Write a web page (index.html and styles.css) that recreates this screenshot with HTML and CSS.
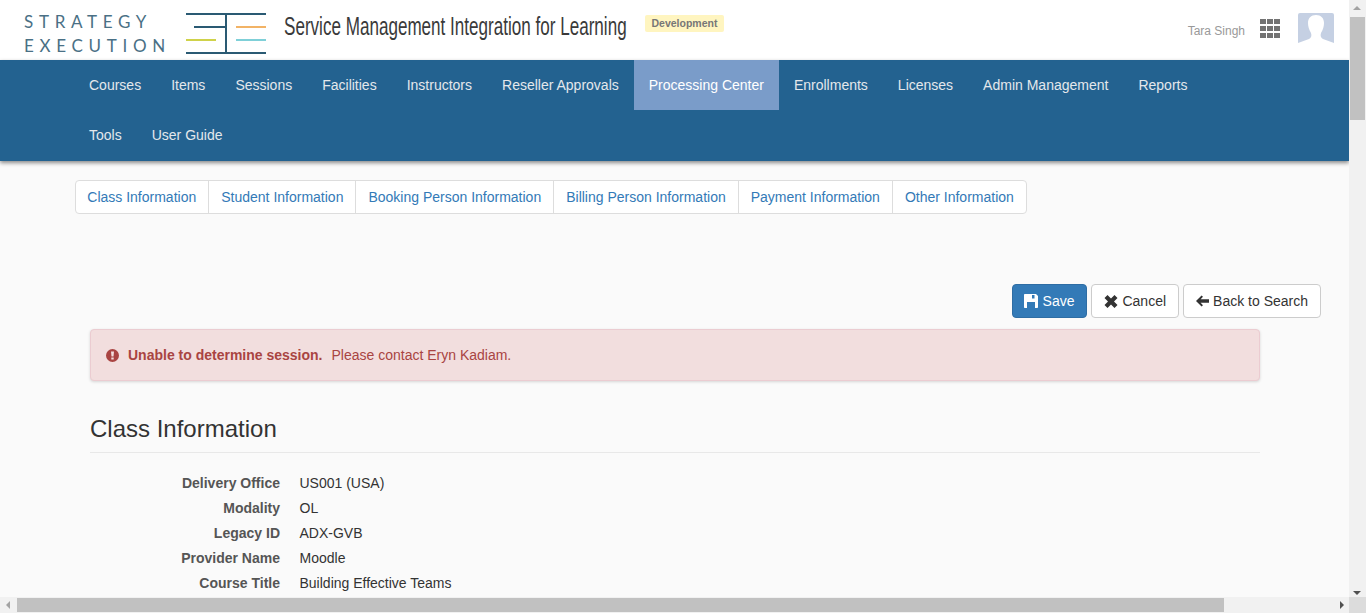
FILE: index.html
```html
<!DOCTYPE html>
<html lang="en">

<head>
    <meta charset="UTF-8">
    <title>Service Management Integration for Learning</title>
    <link rel="stylesheet" href="styles.css">
</head>

<body>
    <header class="topbar">
        <div class="logo-text">
            <div>STRATEGY</div>
            <div>EXECUTION</div>
        </div>
        <svg class="logo-mark" width="82" height="42" viewBox="0 0 82 42">
            <g fill="none" stroke-width="2">
                <path d="M0 2H80M8 15H40M40 2V40M0 41H80" stroke="#2a5a73" />
                <path d="M50 15H80" stroke="#f2b366" />
                <path d="M0 28H30" stroke="#cfd24a" />
                <path d="M50 28H80" stroke="#7fd0d8" />
            </g>
        </svg>
        <div class="app-title">Service Management Integration for Learning</div>
        <span class="env-badge">Development</span>
        <div class="user-area">
            <span class="user-name">Tara Singh</span>
            <div class="apps-grid">
                <i></i><i></i><i></i><i></i><i></i><i></i><i></i><i></i><i></i>
            </div>
            <svg class="avatar" width="36" height="33" viewBox="0 0 36 33">
                <rect width="36" height="33" rx="2" fill="#c5d0e3" />
                <path d="M0 33V30L11 26C13 25 14 23 13 20C11 17 10 13 10 10C10 5 13 2 18 2C23 2 26 5 26 10C26 13 25 17 23 20C22 23 23 25 25 26L36 30V33Z" fill="#fff" />
            </svg>
        </div>
    </header>

    <nav class="mainnav">
        <a href="#">Courses</a>
        <a href="#">Items</a>
        <a href="#">Sessions</a>
        <a href="#">Facilities</a>
        <a href="#">Instructors</a>
        <a href="#">Reseller Approvals</a>
        <a href="#" class="active">Processing Center</a>
        <a href="#">Enrollments</a>
        <a href="#">Licenses</a>
        <a href="#">Admin Management</a>
        <a href="#">Reports</a>
        <a href="#">Tools</a>
        <a href="#">User Guide</a>
    </nav>

    <div class="content">
        <ul class="tabs">
            <li><a href="#">Class Information</a></li>
            <li><a href="#">Student Information</a></li>
            <li><a href="#">Booking Person Information</a></li>
            <li><a href="#">Billing Person Information</a></li>
            <li><a href="#">Payment Information</a></li>
            <li><a href="#">Other Information</a></li>
        </ul>

        <div class="actions">
            <button class="btn btn-primary">
                <svg width="14" height="14" viewBox="0 0 14 14"><path fill-rule="evenodd" d="M0 1C0 .4.4 0 1 0H12L14 2V13C14 13.600 13.600 14 13 14H1C.4 14 0 13.600 0 13ZM8 1V4.500H10.500V1ZM3 8V14H11V8Z" fill="#fff" /></svg>
                Save
            </button>
            <button class="btn">
                <svg width="14" height="13" viewBox="0 0 13 13"><path d="M0 3L3 0L6.500 3.500L10 0L13 3L9.500 6.500L13 10L10 13L6.500 9.500L3 13L0 10L3.500 6.500Z" fill="#333" /></svg>
                Cancel
            </button>
            <button class="btn">
                <svg width="13" height="12" viewBox="0 0 14 12"><path d="M6 0L7.500 1.500L5 4H14V8H5L7.500 10.500L6 12L0 6Z" fill="#333" /></svg>
                Back to Search
            </button>
        </div>

        <div class="section">
            <div class="alert">
                <svg width="13" height="13" viewBox="0 0 13 13"><path fill-rule="evenodd" d="M6.500 0A6.500 6.500 0 1 1 6.500 13A6.500 6.500 0 1 1 6.500 0ZM5 2.500L5.500 7.500H7.500L8 2.500ZM5.300 8.500V10.500H7.700V8.500Z" fill="#a94442" /></svg>
                <strong>Unable to determine session.</strong>
                <span>Please contact Eryn Kadiam.</span>
            </div>

            <h3 class="section-title">Class Information</h3>

            <dl class="details">
                <dt>Delivery Office</dt>
                <dd>US001 (USA)</dd>
                <dt>Modality</dt>
                <dd>OL</dd>
                <dt>Legacy ID</dt>
                <dd>ADX-GVB</dd>
                <dt>Provider Name</dt>
                <dd>Moodle</dd>
                <dt>Course Title</dt>
                <dd>Building Effective Teams</dd>
            </dl>
        </div>
    </div>

    <!-- browser scrollbars -->
    <div class="scroll-v">
        <span class="arrow arrow-up"></span>
        <span class="thumb-v"></span>
        <span class="arrow arrow-down"></span>
    </div>
    <div class="scroll-h">
        <span class="arrow arrow-left"></span>
        <span class="thumb-h"></span>
        <span class="arrow arrow-right"></span>
    </div>
    <div class="scroll-corner"></div>
</body>

</html>
```

FILE: styles.css
```css
html,
body {
    margin: 0;
    height: 613px;
    overflow: hidden;
}

body {
    background: #fafafa;
    color: #333;
    font-family: "Liberation Sans", Arial, sans-serif;
    font-size: 14px;
    line-height: 20px;
}

.topbar {
    height: 60px;
    width: 1349px;
    background: #fff;
    display: flex;
    align-items: flex-start;
    box-sizing: border-box;
    padding-left: 24px;
}

.logo-text {
    width: 162px;
    margin-top: 10px;
    font-family: "Lato", sans-serif;
    font-size: 17px;
    line-height: 24px;
    letter-spacing: 5.700px;
    color: #4a7085;
    white-space: nowrap;
}

.logo-mark {
    margin-top: 12px;
}

/* no condensed family installed, so the title is squeezed to its width */
.app-title {
    margin: 11px 0 0 16px;
    width: 342px;
    font-family: "Liberation Sans", sans-serif;
    font-size: 25px;
    line-height: 30px;
    color: #3a3a3a;
    white-space: nowrap;
    transform: scaleX(.683);
    transform-origin: left top;
}

.env-badge {
    margin: 15px 0 0 19px;
    padding: 0 6.500px;
    height: 17px;
    background: #fff5c0;
    border-radius: 2px;
    color: #777;
    font-size: 10.500px;
    font-weight: bold;
    line-height: 17px;
}

.user-area {
    margin-left: auto;
    margin-top: 13px;
    padding-right: 15px;
    display: flex;
    align-items: flex-start;
}

.user-name {
    margin-top: 8px;
    font-size: 12px;
    color: #999;
}

.apps-grid {
    margin: 6px 0 0 15px;
    width: 20px;
    display: grid;
    grid-template-columns: repeat(3, 6px);
    grid-auto-rows: 5px;
    gap: 2px 1px;
}

.apps-grid i {
    background: #737373;
}

.avatar {
    margin-left: 18px;
}

.mainnav {
    width: 1349px;
    height: 101px;
    box-sizing: border-box;
    padding: 0 100px 0 74px;
    background: #236290;
    box-shadow: 0 2px 4px rgba(0, 0, 0, .45);
    display: flex;
    flex-wrap: wrap;
    align-content: flex-start;
    position: relative;
}

.mainnav a {
    height: 50px;
    padding: 0 15px;
    line-height: 50px;
    color: #e4e8ec;
    text-decoration: none;
}

.mainnav a.active {
    background: #7a9cc9;
    color: #fff;
}

.content {
    width: 1349px;
    box-sizing: border-box;
    padding: 19px 28px 0 75px;
}

.tabs {
    list-style: none;
    margin: 0;
    padding: 0;
    display: inline-flex;
    background: #fff;
    border: 1px solid #ddd;
    border-radius: 4px;
}

.tabs li+li {
    border-left: 1px solid #ddd;
}

.tabs a {
    display: block;
    padding: 6px 12px;
    color: #337ab7;
    text-decoration: none;
}

.tabs li:first-child a {
    padding-left: 11.300px;
}

.actions {
    margin-top: 70px;
    display: flex;
    justify-content: flex-end;
    gap: 4px;
}

.btn {
    height: 34px;
    padding: 0 12px;
    background: #fff;
    border: 1px solid #ccc;
    border-radius: 4px;
    color: #333;
    font: 14px "Liberation Sans", Arial, sans-serif;
    display: flex;
    align-items: center;
    gap: 4px;
}

.btn-primary {
    padding-left: 11px;
    gap: 5px;
    background: #337ab7;
    border-color: #2e6da4;
    color: #fff;
}

.section {
    width: 1170px;
    margin: 11px 0 0 15px;
}

.alert {
    height: 52px;
    box-sizing: border-box;
    padding-left: 15px;
    display: flex;
    align-items: center;
    background: #f2dede;
    border: 1px solid #ebccd1;
    border-radius: 4px;
    box-shadow: 0 1px 3px rgba(0, 0, 0, .15);
    color: #a94442;
}

.alert strong {
    margin: 0 9px 0 9px;
}

.section-title {
    margin: 33px 0 0;
    padding-bottom: 9px;
    border-bottom: 1px solid #e8e8e8;
    font-size: 24px;
    font-weight: 400;
    line-height: 29px;
}

.details {
    margin: 20px 0 0;
    display: grid;
    grid-template-columns: 190px 1fr;
    grid-auto-rows: 25px;
    column-gap: 19.500px;
}

.details dt {
    text-align: right;
    font-weight: bold;
    color: #555;
}

.details dd {
    margin: 0;
}

.scroll-v {
    position: fixed;
    top: 0;
    right: 0;
    width: 17px;
    height: 598px;
    background: #f1f1f1;
}

.thumb-v {
    position: absolute;
    top: 17px;
    left: 1px;
    width: 15px;
    height: 103px;
    background: #c1c1c1;
}

.scroll-h {
    position: fixed;
    left: 0;
    bottom: 0;
    width: 1349px;
    height: 15px;
    padding-top: 1px;
    background: #f1f1f1;
}

.thumb-h {
    position: absolute;
    top: 1px;
    left: 17px;
    width: 1207px;
    height: 14px;
    background: #c1c1c1;
}

.scroll-corner {
    position: fixed;
    right: 0;
    bottom: 0;
    width: 17px;
    height: 16px;
    background: #dcdcdc;
}

.arrow {
    position: absolute;
    width: 0;
    height: 0;
    border: 4px solid transparent;
}

.arrow-up {
    top: 2px;
    left: 4px;
    border-bottom-color: #a3a3a3;
}

.arrow-down {
    bottom: -1px;
    left: 4px;
    border-top-color: #505050;
}

.arrow-left {
    top: 4px;
    left: 2px;
    border-right-color: #a3a3a3;
}

.arrow-right {
    top: 4px;
    right: 1px;
    border-left-color: #505050;
}
```
